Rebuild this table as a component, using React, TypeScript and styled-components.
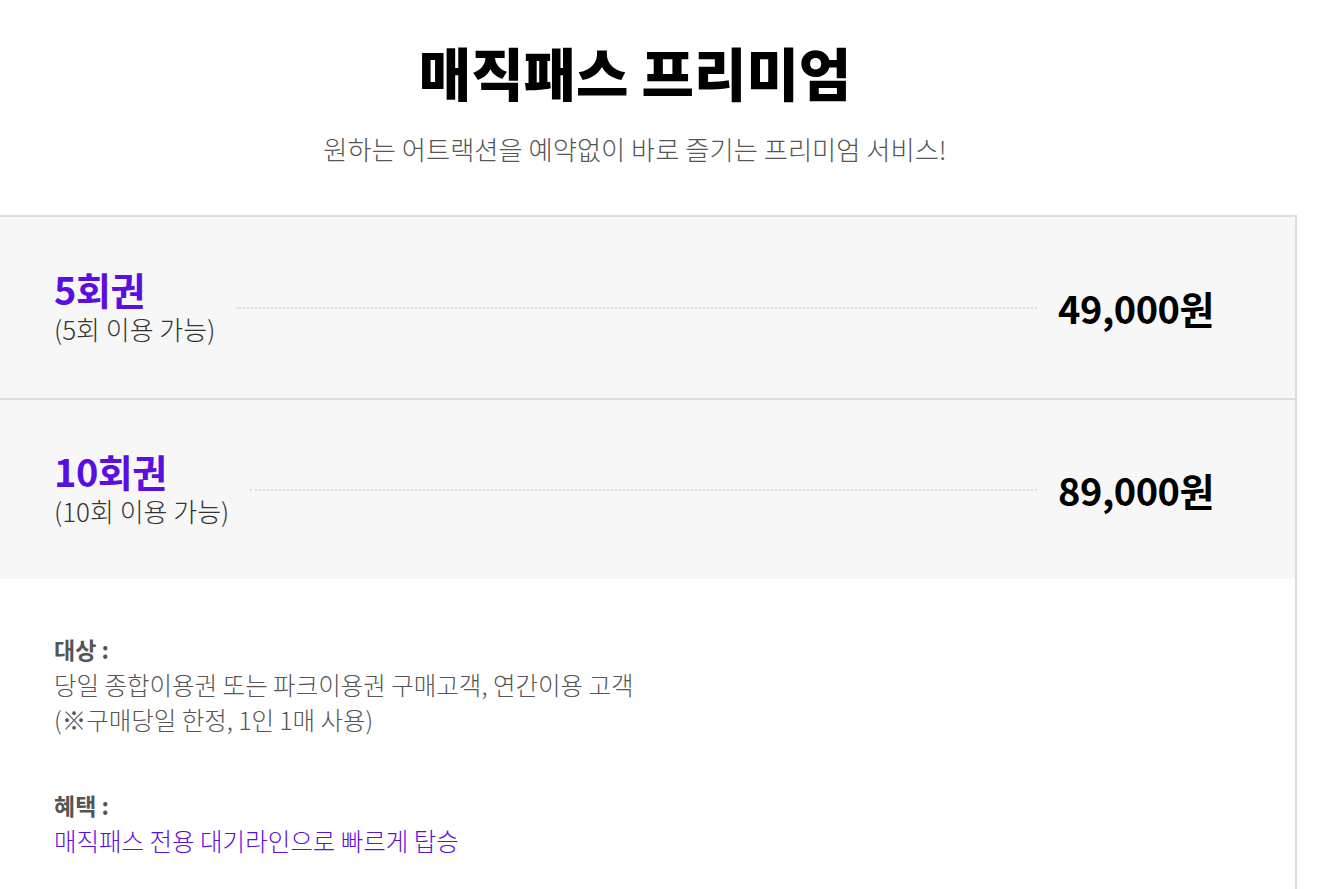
import React from 'react';
import styled, { createGlobalStyle } from 'styled-components';

interface PassItem {
  id: string;
  name: string;
  desc: string;
  price: string;
}

const passes: PassItem[] = [
  { id: '5', name: '5회권', desc: '(5회 이용 가능)', price: '49,000원' },
  { id: '10', name: '10회권', desc: '(10회 이용 가능)', price: '89,000원' },
];

const App: React.FC = () => {
  return (
    <>
      <GlobalStyle />
      <Page>
        <Header>
          <Title>매직패스 프리미엄</Title>
          <Subtitle>원하는 어트랙션을 예약없이 바로 즐기는 프리미엄 서비스!</Subtitle>
        </Header>
        <Panel>
          <PassList>
            {passes.map((pass) => (
              <PassRow key={pass.id}>
                <PassLabel>
                  <PassName>{pass.name}</PassName>
                  <PassDesc>{pass.desc}</PassDesc>
                </PassLabel>
                <Leader />
                <Price>{pass.price}</Price>
              </PassRow>
            ))}
          </PassList>
          <Info>
            <InfoBlock>
              <InfoTitle>대상 :</InfoTitle>
              <InfoText>
                당일 종합이용권 또는 파크이용권 구매고객, 연간이용 고객
                <br />
                (※구매당일 한정, 1인 1매 사용)
              </InfoText>
            </InfoBlock>
            <InfoBlock>
              <InfoTitle>혜택 :</InfoTitle>
              <InfoText $accent>매직패스 전용 대기라인으로 빠르게 탑승</InfoText>
            </InfoBlock>
          </Info>
        </Panel>
      </Page>
    </>
  );
};

export default App;

const GlobalStyle = createGlobalStyle`
  html, body {
    margin: 0;
    padding: 0;
    background: #fff;
  }
  body {
    font-family: "Noto Sans CJK KR", "Noto Sans", sans-serif;
    color: #333;
  }
`;

const Page = styled.div`
  width: 1334px;
  height: 889px;
  overflow: hidden;
`;

const Header = styled.header`
  width: 1270px;
  padding-top: 31px;
  text-align: center;
`;

const Title = styled.h1`
  margin: 0;
  font-size: 57px;
  line-height: 80px;
  font-weight: 900;
  color: #000;
`;

const Subtitle = styled.p`
  margin: 20px 0 0;
  font-size: 26.3px;
  line-height: 36px;
  font-weight: 300;
  color: #555;
`;

const Panel = styled.section`
  width: 1295px;
  margin-top: 48px;
  border-top: 2px solid #ddd;
  border-right: 2px solid #ddd;
  min-height: 700px;
`;

const PassList = styled.ul`
  list-style: none;
  margin: 0;
  padding: 0;
  background: #f7f7f7;
`;

const PassRow = styled.li`
  display: flex;
  align-items: center;
  height: 181px;
  padding: 0 81px 0 54px;
  box-sizing: border-box;

  & + & {
    border-top: 2px solid #ddd;
  }
`;

const PassLabel = styled.div`
  display: flex;
  flex-direction: column;
  margin-top: -2px;
`;

const PassName = styled.strong`
  font-size: 38px;
  line-height: 44px;
  font-weight: 700;
  color: #5a0fe0;
  letter-spacing: -0.5px;
`;

const PassDesc = styled.span`
  font-size: 26px;
  line-height: 36px;
  font-weight: 300;
  color: #333;
`;

const Leader = styled.span`
  flex: 1;
  margin: 0 21px;
  border-top: 2px dotted #ddd;
`;

const Price = styled.strong`
  font-size: 38px;
  font-weight: 700;
  color: #000;
  letter-spacing: -0.5px;
`;

const Info = styled.div`
  padding: 52px 54px 0;
  display: flex;
  flex-direction: column;
  gap: 50px;
`;

const InfoBlock = styled.div`
  display: flex;
  flex-direction: column;
`;

const InfoTitle = styled.strong`
  font-size: 23px;
  line-height: 36px;
  font-weight: 700;
  color: #555;
`;

const InfoText = styled.p<{ $accent?: boolean }>`
  margin: 0;
  font-size: 24.5px;
  line-height: 35px;
  font-weight: 300;
  color: ${(p) => (p.$accent ? '#5a0fe0' : '#555')};
`;
